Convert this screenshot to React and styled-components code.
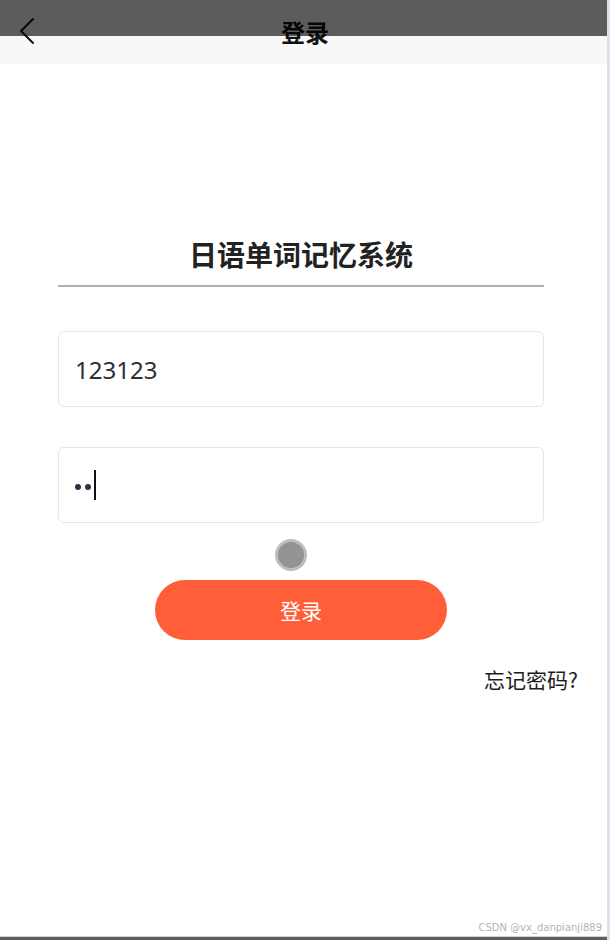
import styled, { createGlobalStyle } from 'styled-components'

const GlobalStyle = createGlobalStyle`
  html, body {
    margin: 0;
    padding: 0;
    background: #ffffff;
  }
  body {
    font-family: 'Noto Sans', 'Noto Sans CJK SC', sans-serif;
  }
`

export default function App() {
  return (
    <Page>
      <GlobalStyle />
      <StatusShade />
      <NavBar>
        <BackButton aria-label="back">
          <svg width="16" height="28" viewBox="0 0 16 28" fill="none">
            <path d="M14 2 L2 14 L14 26" stroke="#111" strokeWidth="2" strokeLinecap="round" strokeLinejoin="round" />
          </svg>
        </BackButton>
        <NavTitle>登录</NavTitle>
      </NavBar>

      <Main>
        <Heading>日语单词记忆系统</Heading>
        <Divider />
        <Field type="text" defaultValue="123123" />
        <PasswordField>
          <Dot />
          <Dot />
          <Caret />
        </PasswordField>
        <Knob />
        <LoginButton>登录</LoginButton>
        <ForgotRow>
          <ForgotLink>忘记密码?</ForgotLink>
        </ForgotRow>
      </Main>

      <Footer>
        <Watermark>CSDN @vx_danpianji889</Watermark>
      </Footer>
      <BottomBar />
    </Page>
  )
}

const Page = styled.div`
  position: relative;
  width: 607px;
  height: 940px;
  border-right: 3px solid #dde1ee;
  display: flex;
  flex-direction: column;
  overflow: hidden;
  background: #ffffff;
`

const StatusShade = styled.div`
  position: absolute;
  top: 0;
  left: 0;
  width: 610px;
  height: 36px;
  background: rgba(0, 0, 0, 0.63);
  z-index: 5;
  pointer-events: none;
`

const NavBar = styled.div`
  position: relative;
  height: 64px;
  background: #f8f8f8;
  display: flex;
  align-items: center;
  justify-content: center;
  flex-shrink: 0;
`

const BackButton = styled.div`
  position: absolute;
  left: 19px;
  top: 17px;
  width: 16px;
  height: 28px;
  display: flex;
`

const NavTitle = styled.span`
  font-family: 'Noto Sans CJK SC', sans-serif;
  font-size: 24px;
  font-weight: 700;
  color: #111;
  margin-left: 3px;
  margin-top: -1px;
`

const Main = styled.div`
  display: flex;
  flex-direction: column;
  padding: 0 63px 0 58px;
`

const Heading = styled.h1`
  margin: 170px 0 0;
  text-align: center;
  font-family: 'Noto Sans CJK SC', sans-serif;
  font-size: 28px;
  font-weight: 700;
  line-height: 40px;
  color: #222;
`

const Divider = styled.div`
  height: 2px;
  background: #b0b0b4;
  margin-top: 11px;
`

const fieldBox = `
  box-sizing: border-box;
  width: 100%;
  height: 76px;
  border: 1px solid #e6e6e6;
  border-radius: 6px;
  background: #fff;
  padding: 0 16px;
`

const Field = styled.input`
  ${fieldBox}
  margin-top: 44px;
  font-family: 'Noto Sans', sans-serif;
  font-size: 24px;
  color: #2b2f38;
  outline: none;
`

const PasswordField = styled.div`
  ${fieldBox}
  margin-top: 40px;
  display: flex;
  align-items: center;
  gap: 4px;
`

const Dot = styled.span`
  width: 6px;
  height: 6px;
  border-radius: 50%;
  background: #2b3444;
  margin-top: 4px;
`

const Caret = styled.span`
  display: inline-block;
  width: 2px;
  height: 30px;
  background: #111;
  margin-left: -1px;
`

const Knob = styled.div`
  box-sizing: border-box;
  width: 32px;
  height: 32px;
  border-radius: 50%;
  background: #939393;
  border: 3px solid #bdbdbd;
  margin: 16px 0 0 217px;
`

const LoginButton = styled.button`
  align-self: center;
  width: 292px;
  height: 60px;
  margin-top: 9px;
  border: none;
  border-radius: 30px;
  background: #ff5e38;
  color: #fff;
  font-family: 'Noto Sans CJK SC', sans-serif;
  font-size: 21px;
`

const ForgotRow = styled.div`
  display: flex;
  justify-content: flex-end;
  margin: 24px -34px 0 0;
`

const ForgotLink = styled.span`
  font-family: 'Noto Sans CJK SC', sans-serif;
  font-size: 21px;
  color: #1c1c1c;
`

const Footer = styled.div`
  margin-top: auto;
  display: flex;
  justify-content: flex-end;
  padding: 0 5px 3px 0;
`

const Watermark = styled.span`
  font-family: 'DejaVu Sans', sans-serif;
  font-size: 10px;
  color: #b4b4b4;
`

const BottomBar = styled.div`
  height: 3px;
  background: #5e5e5e;
  border-top: 1px solid #cfcfcf;
  flex-shrink: 0;
  margin-right: -3px;
`
